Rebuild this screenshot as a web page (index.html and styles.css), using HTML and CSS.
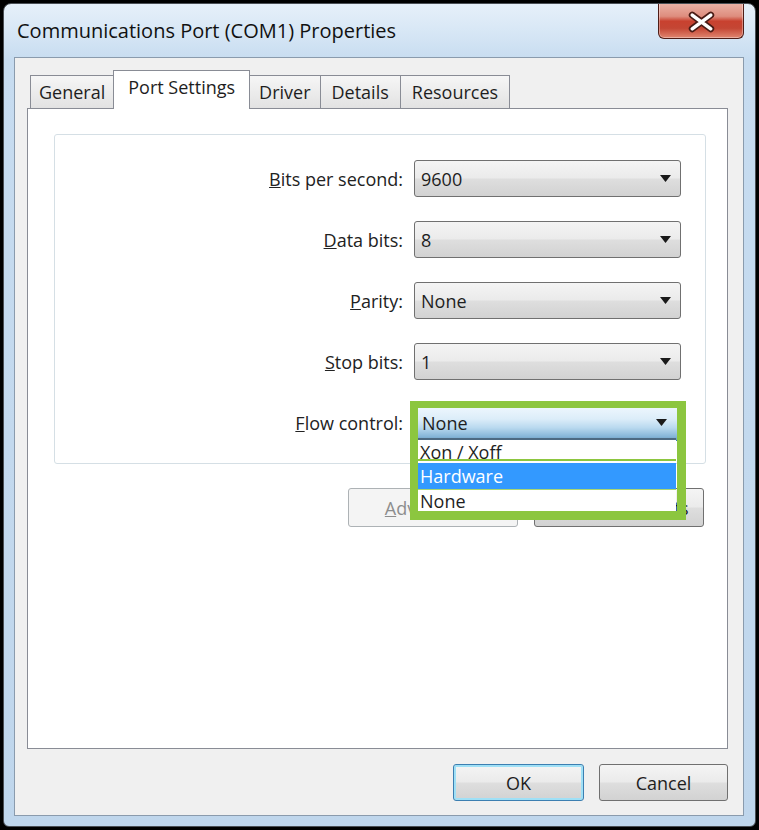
FILE: index.html
```html
<!DOCTYPE html>
<html lang="en">
<head>
<meta charset="utf-8">
<title>Communications Port (COM1) Properties</title>
<link rel="stylesheet" href="styles.css">
</head>
<body>
<div class="window">
  <div class="titlebar">
    <div class="title">Communications Port (COM1) Properties</div>
    <div class="close">
      <svg width="86" height="36" viewBox="0 0 86 36">
        <path d="M34 13 L53 27 M53 13 L34 27" stroke="#4a1c16" stroke-width="7" stroke-linecap="round" fill="none"/>
        <path d="M34 13 L53 27 M53 13 L34 27" stroke="#ffffff" stroke-width="3.6" stroke-linecap="round" fill="none"/>
      </svg>
    </div>
  </div>
  <div class="client">
    <div class="tabs">
      <div class="tab">General</div>
      <div class="tab active">Port Settings</div>
      <div class="tab tab-mid">Driver</div>
      <div class="tab tab-wide">Details</div>
      <div class="tab tab-wide">Resources</div>
    </div>
    <div class="panel">
      <div class="group">
        <div class="label"><u>B</u>its per second:</div>
        <div class="combo"><span>9600</span><svg class="arrow" width="11" height="7" viewBox="0 0 11 7"><path d="M0 0 H11 L5.5 7 Z" fill="#1a1a1a"/></svg></div>

        <div class="label"><u>D</u>ata bits:</div>
        <div class="combo"><span>8</span><svg class="arrow" width="11" height="7" viewBox="0 0 11 7"><path d="M0 0 H11 L5.5 7 Z" fill="#1a1a1a"/></svg></div>

        <div class="label"><u>P</u>arity:</div>
        <div class="combo"><span>None</span><svg class="arrow" width="11" height="7" viewBox="0 0 11 7"><path d="M0 0 H11 L5.5 7 Z" fill="#1a1a1a"/></svg></div>

        <div class="label"><u>S</u>top bits:</div>
        <div class="combo"><span>1</span><svg class="arrow" width="11" height="7" viewBox="0 0 11 7"><path d="M0 0 H11 L5.5 7 Z" fill="#1a1a1a"/></svg></div>

        <div class="label"><u>F</u>low control:</div>
        <div class="combo-wrap">
          <div class="combo hot"><span>None</span><svg class="arrow" width="11" height="7" viewBox="0 0 11 7"><path d="M0 0 H11 L5.5 7 Z" fill="#1a1a1a"/></svg></div>
          <div class="droplist">
            <div class="opt opt-xon">Xon / Xoff</div>
            <div class="opt opt-sel">Hardware</div>
            <div class="opt opt-last">None</div>
          </div>
          <div class="callout"></div>
        </div>
      </div>
      <div class="panel-actions">
        <button class="btn btn-wide disabled"><span><u>A</u>dvanced...</span></button>
        <button class="btn btn-wide"><span><u>R</u>estore Defaults</span></button>
      </div>
    </div>
    <div class="dialog-actions">
      <button class="btn btn-ok">OK</button>
      <button class="btn btn-cancel">Cancel</button>
    </div>
  </div>
</div>
</body>
</html>
```
FILE: styles.css
```css
html, body {
  margin: 0;
  padding: 0;
}
body {
  background: #000;
  font-family: "Open Sans", "Liberation Sans", sans-serif;
  font-size: 18px;
  color: #1e1e1e;
}
.window {
  margin: 3px;
  width: 753px;
  height: 824px;
  box-sizing: border-box;
  border: 1px solid #4a4f55;
  border-radius: 8px 8px 6px 6px;
  background: linear-gradient(180deg, #e6f0f9 0, #d6e6f5 30px, #c7dcf0 56px, #bfd6ec 100%);
  display: flex;
  flex-direction: column;
  padding: 0 11px 10px 10px;
  overflow: hidden;
}
.titlebar {
  height: 53px;
  flex-shrink: 0;
  display: flex;
  align-items: flex-start;
}
.title {
  padding: 14px 0 0 3px;
  font-size: 20px;
  line-height: 26px;
  color: #111;
  white-space: nowrap;
}
.close {
  margin-left: auto;
  margin-top: -1px;
  width: 86px;
  height: 36px;
  box-sizing: border-box;
  border: 1px solid #4f1d17;
  border-top: none;
  border-radius: 0 0 6px 6px;
  background: linear-gradient(180deg, #ecb3a7 0%, #de8d7e 38%, #c8412f 52%, #c44634 72%, #e08670 100%);
  box-shadow: inset 0 0 0 1px rgba(255, 255, 255, 0.35);
  display: flex;
}
.close svg {
  display: block;
  margin-top: -1px;
}
.client {
  flex: 1;
  border: 1px solid #8a9bad;
  background: #f0f0f0;
  padding: 12px 15px 0 12px;
  display: flex;
  flex-direction: column;
}
.tabs {
  display: flex;
  align-items: flex-end;
  height: 38px;
  padding-left: 3px;
}
.tab {
  box-sizing: border-box;
  height: 33px;
  line-height: 32px;
  padding: 0 8px;
  border: 1px solid #898c95;
  border-bottom: none;
  margin-right: -1px;
  background: linear-gradient(180deg, #f6f6f6, #e2e2e2);
  color: #1e1e1e;
  white-space: nowrap;
}
.tab.tab-mid {
  padding: 0 9px;
}
.tab.tab-wide {
  padding: 0 11px;
}
.tab.active {
  height: 39px;
  margin-bottom: -1px;
  background: #fff;
  padding: 0 14px;
  line-height: 32px;
  position: relative;
  z-index: 1;
}
.panel {
  height: 641px;
  box-sizing: border-box;
  border: 1px solid #898c95;
  background: #fff;
  padding: 25px 21px 0 26px;
}
.group {
  height: 330px;
  box-sizing: border-box;
  border: 1px solid #d5dfe5;
  border-radius: 3px;
  display: grid;
  grid-template-columns: 1fr 267px;
  grid-auto-rows: 37px;
  row-gap: 24px;
  column-gap: 11px;
  padding: 25px 24px 0 0;
  align-content: start;
}
.label {
  align-self: center;
  text-align: right;
  color: #222;
  white-space: nowrap;
}
.combo {
  box-sizing: border-box;
  height: 37px;
  border: 1px solid #707070;
  border-radius: 3px;
  background: linear-gradient(180deg, #f4f4f4 0%, #ebebeb 48%, #dedede 52%, #d2d2d2 100%);
  display: flex;
  align-items: center;
  justify-content: space-between;
  padding: 0 9px 0 6px;
  color: #1e1e1e;
}
.combo-wrap {
  position: relative;
}
.combo.hot {
  border-color: #3c7fb1;
  background: linear-gradient(180deg, #f0f8fe 0%, #dcedf9 40%, #b9d9ef 65%, #86b6d8 90%, #6f9fc3 100%);
  padding-left: 7px;
  padding-right: 13px;
}
.droplist {
  position: absolute;
  left: 4px;
  top: 34px;
  width: 258px;
  border-top: 2px solid #4d6a82;
  background: #fff;
  z-index: 2;
}
.opt {
  padding-left: 2px;
  white-space: nowrap;
  overflow: hidden;
  color: #1e1e1e;
}
.opt-xon {
  height: 19px;
  line-height: 24px;
  border-bottom: 2px solid #8dc63f;
  margin-bottom: 2px;
}
.opt-sel {
  height: 26px;
  line-height: 26px;
  background: #3399ff;
  color: #fff;
  border-bottom: 1px solid #a9d672;
}
.opt-last {
  height: 21px;
  line-height: 22px;
}
.callout {
  position: absolute;
  left: -4px;
  top: -3px;
  width: 276px;
  height: 119px;
  box-sizing: border-box;
  border-style: solid;
  border-color: #8cc63f;
  border-width: 7px 9px 9px 8px;
  z-index: 3;
  pointer-events: none;
}
.panel-actions {
  display: flex;
  justify-content: flex-end;
  gap: 16px;
  margin-top: 24px;
  padding-right: 2px;
}
.btn {
  box-sizing: border-box;
  font: inherit;
  color: #1e1e1e;
  padding: 0;
  margin: 0;
  border: 1px solid #707070;
  border-radius: 3px;
  background: linear-gradient(180deg, #f4f4f4 0%, #ebebeb 48%, #dedede 52%, #d2d2d2 100%);
  display: flex;
  align-items: center;
  justify-content: center;
  white-space: nowrap;
}
.btn-wide {
  width: 170px;
  height: 39px;
}
.btn.disabled {
  border-color: #adb2b5;
  background: #f4f4f4;
  color: #8d8d8d;
}
.dialog-actions {
  display: flex;
  justify-content: flex-end;
  gap: 15px;
  margin-top: 15px;
}
.btn-ok {
  width: 131px;
  height: 37px;
  border-color: #3c7fb1;
  box-shadow: inset 0 0 0 2px #9fe0f6;
}
.btn-cancel {
  width: 129px;
  height: 37px;
}
```
